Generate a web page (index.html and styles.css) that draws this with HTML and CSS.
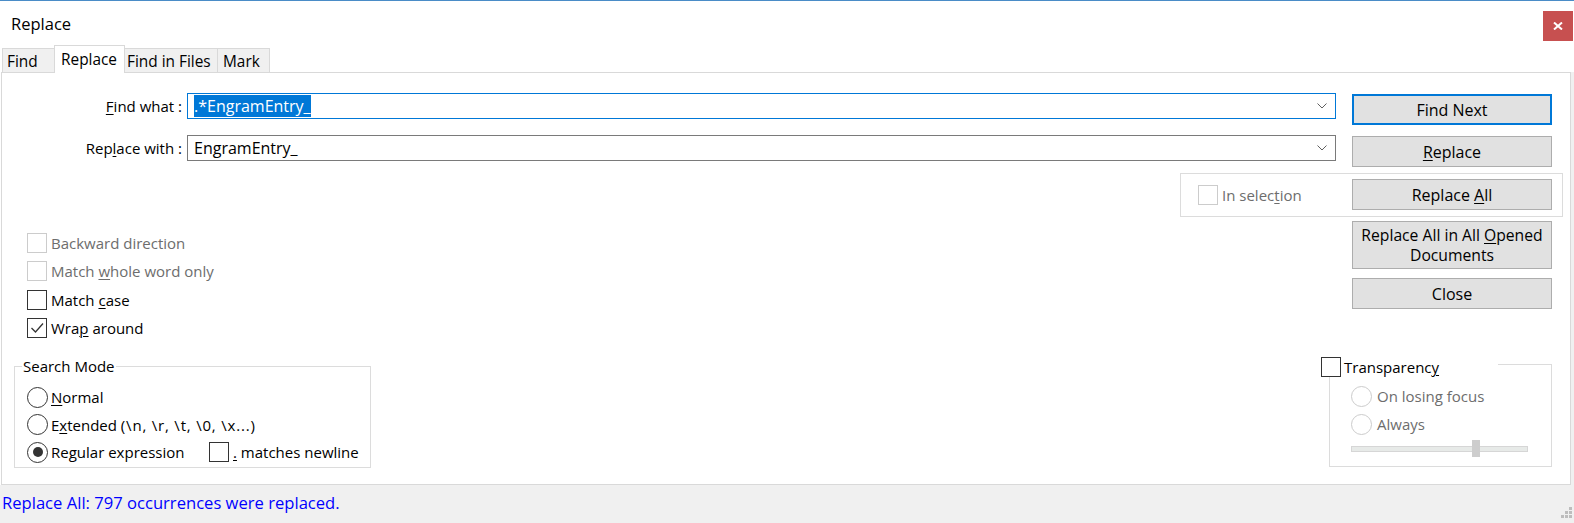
FILE: index.html
```html
<!DOCTYPE html>
<html>
<head>
<meta charset="utf-8">
<title>Replace</title>
<link rel="stylesheet" href="styles.css">
</head>
<body>
<div class="window">
  <div class="titlebar">
    <div class="title">Replace</div>
    <div class="close"><svg width="10" height="8" viewBox="0 0 10 8"><path d="M1 0.5 L9 7.5 M9 0.5 L1 7.5" stroke="#fff" stroke-width="2"/></svg></div>
  </div>
  <div class="tabs">
    <div class="tab tab-find">Find</div>
    <div class="tab tab-replace active">Replace</div>
    <div class="tab tab-files">Find in Files</div>
    <div class="tab tab-mark">Mark</div>
  </div>
  <div class="content">
    <div class="panel">
      <div class="left">
        <div class="field-row">
          <div class="field-label"><u>F</u>ind what :</div>
          <div class="combo focus">
            <span class="combo-text"><span class="sel">.*EngramEntry_</span></span>
            <svg class="chev" width="10" height="6" viewBox="0 0 10 6"><path d="M0.5 0.5 L5 5 L9.5 0.5" fill="none" stroke="#606060" stroke-width="1"/></svg>
          </div>
        </div>
        <div class="field-row">
          <div class="field-label">Rep<u>l</u>ace with :</div>
          <div class="combo">
            <span class="combo-text">EngramEntry_</span>
            <svg class="chev" width="10" height="6" viewBox="0 0 10 6"><path d="M0.5 0.5 L5 5 L9.5 0.5" fill="none" stroke="#606060" stroke-width="1"/></svg>
          </div>
        </div>
        <div class="options">
          <div class="check disabled"><span class="box"></span><span>Backward direction</span></div>
          <div class="check disabled"><span class="box"></span><span>Match <u>w</u>hole word only</span></div>
          <div class="check"><span class="box"></span><span>Match <u>c</u>ase</span></div>
          <div class="check"><span class="box"><svg width="18" height="18" viewBox="0 0 18 18"><path d="M3.5 9 L7.5 13 L15 4.5" fill="none" stroke="#333" stroke-width="1.3"/></svg></span><span>Wra<u>p</u> around</span></div>
        </div>
        <div class="group search">
          <div class="legend">Search Mode</div>
          <div class="radios">
            <div class="radio"><span class="circle"></span><span><u>N</u>ormal</span></div>
            <div class="radio"><span class="circle"></span><span>E<u>x</u>tended <span class="escapes">(\n, \r, \t, \0, \x...)</span></span></div>
            <div class="radio-row">
              <div class="radio"><span class="circle on"></span><span>Re<u>g</u>ular expression</span></div>
              <div class="check"><span class="box"></span><span><u>.</u> matches newline</span></div>
            </div>
          </div>
        </div>
      </div>
      <div class="right">
        <div class="btn default">Find Next</div>
        <div class="btn btn-replace"><span><u>R</u>eplace</span></div>
        <div class="selgroup">
          <div class="check disabled"><span class="box"></span><span>In selec<u>t</u>ion</span></div>
          <div class="btn btn-all"><span>Replace <u>A</u>ll</span></div>
        </div>
        <div class="btn btn-docs"><span>Replace All in All <u>O</u>pened<br>Documents</span></div>
        <div class="btn btn-close">Close</div>
        <div class="tgroup">
          <div class="tlegend"><span class="box"></span><span>Transparenc<u>y</u></span></div>
          <div class="tradios">
            <div class="radio disabled"><span class="circle"></span><span>On losing focus</span></div>
            <div class="radio disabled"><span class="circle"></span><span>Always</span></div>
          </div>
          <div class="slider"><div class="track"></div><div class="thumb"></div></div>
        </div>
      </div>
    </div>
    <div class="edge"></div>
  </div>
  <div class="status">
    <span class="status-text">Replace All: 797 occurrences were replaced.</span>
    <svg class="grip" width="12" height="12" viewBox="0 0 12 12"><g fill="#bdbdbd"><rect x="8" y="0" width="3" height="3"/><rect x="4" y="4" width="3" height="3"/><rect x="8" y="4" width="3" height="3"/><rect x="0" y="8" width="3" height="3"/><rect x="4" y="8" width="3" height="3"/><rect x="8" y="8" width="3" height="3"/></g></svg>
  </div>
</div>
</body>
</html>
```
FILE: styles.css
```css
* { box-sizing: border-box; }

body {
  margin: 0;
  width: 1574px;
  height: 523px;
  overflow: hidden;
  font-family: "Open Sans", "Noto Sans", sans-serif;
  font-size: 15px;
  line-height: 20px;
  color: #000;
  background: #fff;
}

u { text-decoration-thickness: 1px; text-underline-offset: 2px; }

.window {
  display: flex;
  flex-direction: column;
  height: 523px;
  border-top: 1px solid #4a8cc7;
}

.titlebar {
  flex: none;
  height: 43px;
  display: flex;
  justify-content: space-between;
  align-items: flex-start;
}

.title {
  font-size: 16.5px;
  line-height: 22px;
  margin: 12px 0 0 11px;
}

.close {
  width: 30px;
  height: 30px;
  margin: 10px 1px 0 0;
  background: #c75050;
  display: flex;
  align-items: center;
  justify-content: center;
}

.tabs {
  flex: none;
  height: 28px;
  display: flex;
  align-items: flex-end;
  padding-left: 2px;
  font-size: 15.4px;
}

.tab {
  height: 24px;
  border: 1px solid #d9d9d9;
  border-bottom: none;
  background: #f0f0f0;
  margin-right: -1px;
  padding-top: 3px;
  white-space: nowrap;
}

.tab.active {
  height: 28px;
  margin-bottom: -1px;
  padding-top: 4px;
  background: #fff;
  position: relative;
  z-index: 1;
}

.tab-find { width: 53px; padding-left: 4px; }
.tab-replace { width: 71px; padding-left: 6px; }
.tab-files { width: 94px; padding-left: 2px; }
.tab-mark { width: 53px; padding-left: 5px; }

.content {
  flex: 1;
  display: flex;
  padding-left: 1px;
  min-height: 0;
}

.panel {
  flex: 1;
  display: flex;
  border: 1px solid #d9d9d9;
  background: #fff;
}

.edge { width: 3px; background: #f0f0f0; }

.left {
  flex: 1;
  padding-top: 20px;
}

.right {
  flex: none;
  width: 234px;
  padding: 21px 18px 0 16px;
  display: flex;
  flex-direction: column;
}

.field-row {
  display: flex;
  align-items: center;
  height: 26px;
}

.field-row + .field-row { margin-top: 16px; }

.field-label {
  flex: none;
  width: 185px;
  padding-right: 5px;
  text-align: right;
  white-space: nowrap;
}

.combo {
  flex: 1;
  height: 26px;
  border: 1px solid #7a7a7a;
  display: flex;
  align-items: center;
  padding-left: 6px;
  font-size: 16px;
}

.combo.focus { border-color: #0078d7; }

.combo-text { flex: 1; white-space: nowrap; }

.sel { background: #0078d7; color: #fff; }

.chev { flex: none; margin-right: 8px; }

.options {
  margin-top: 72px;
  padding-left: 25px;
  display: flex;
  flex-direction: column;
  gap: 8.4px;
}

.check {
  display: flex;
  align-items: center;
  gap: 4px;
  height: 20px;
  white-space: nowrap;
}

.box {
  flex: none;
  width: 20px;
  height: 20px;
  border: 1px solid #333;
  background: #fff;
  display: flex;
  align-items: center;
  justify-content: center;
}

.check.disabled { color: #6d6d6d; }
.check.disabled .box { border-color: #cccccc; }

.group {
  border: 1px solid #dcdcdc;
}

.search {
  margin: 28px 0 0 12px;
  width: 357px;
  height: 102px;
  padding-left: 12px;
}

.legend {
  width: fit-content;
  margin: -11px 0 0 -5px;
  padding: 0 1px;
  background: #fff;
}

.radios {
  margin-top: 10px;
  display: flex;
  flex-direction: column;
  gap: 5.5px;
}

.radio {
  display: flex;
  align-items: center;
  gap: 3px;
  height: 22px;
  white-space: nowrap;
}

.escapes { letter-spacing: 0.8px; }

.circle {
  flex: none;
  width: 21px;
  height: 21px;
  border: 1px solid #333;
  border-radius: 50%;
  background: #fff;
  display: flex;
  align-items: center;
  justify-content: center;
}

.circle.on::after {
  content: "";
  width: 10px;
  height: 10px;
  border-radius: 50%;
  background: #333;
}

.radio.disabled { color: #6d6d6d; gap: 5px; }
.radio.disabled .circle { border-color: #cccccc; }

.radio-row {
  display: flex;
  align-items: center;
}

.radio-row .radio { width: 182px; }

.btn {
  flex: none;
  height: 31px;
  border: 1px solid #adadad;
  background: #e1e1e1;
  display: flex;
  align-items: center;
  justify-content: center;
  text-align: center;
  white-space: nowrap;
  font-size: 16px;
}

.btn.default { border: 2px solid #0078d7; }

.btn-replace { margin-top: 11px; }

.selgroup {
  margin: 6px -11px 0 -172px;
  border: 1px solid #dcdcdc;
  padding: 5px 10px 6px 17px;
  display: flex;
  align-items: center;
}

.btn-all { width: 200px; margin-left: auto; }

.btn-docs { margin-top: 4px; height: 48px; font-size: 15.7px; }

.btn-close { margin-top: 9px; }

.tgroup {
  margin: 55px 0 0 -23px;
  height: 103px;
  border: 1px solid #dcdcdc;
  padding-left: 21px;
}

.tlegend {
  width: 177px;
  margin: -8px 0 0 -30px;
  background: #fff;
  display: flex;
  align-items: center;
  gap: 3px;
  height: 20px;
}

.tradios {
  margin-top: 8px;
  display: flex;
  flex-direction: column;
  gap: 6px;
}

.slider {
  position: relative;
  width: 177px;
  height: 17px;
  margin-top: 5px;
}

.track {
  position: absolute;
  left: 0;
  right: 0;
  top: 6px;
  height: 6px;
  background: #e7eae8;
  border: 1px solid #d6d6d6;
}

.thumb {
  position: absolute;
  left: 121px;
  top: 0;
  width: 8px;
  height: 17px;
  background: #cdcdcd;
}

.status {
  flex: none;
  height: 38px;
  background: #f0f0f0;
  display: flex;
  padding: 8px 0 0 2px;
  color: #0000ff;
  font-size: 16.6px;
}

.status-text { white-space: nowrap; }

.grip {
  margin: auto 1px 4px auto;
}
```
